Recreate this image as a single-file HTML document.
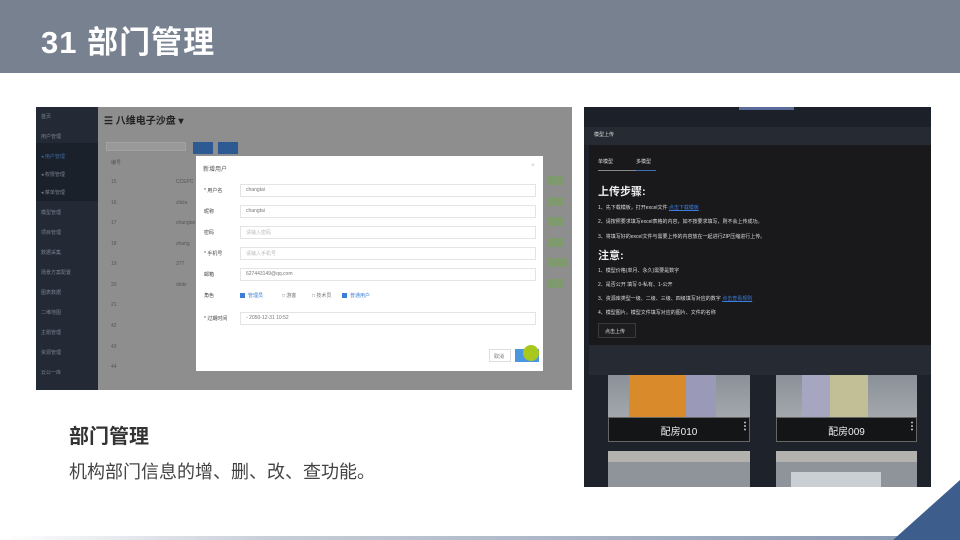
<!DOCTYPE html>
<html><head><meta charset="utf-8"><style>
*{margin:0;padding:0;box-sizing:border-box}
body{width:960px;height:540px;overflow:hidden;background:#fff;position:relative;font-family:"Liberation Sans","Noto Sans CJK SC",sans-serif}
.a{position:absolute}
.t{font-size:5px;color:#666;white-space:nowrap}
.w{color:#ddd}
</style></head><body>
<div class="a" style="left:0;top:0;width:960px;height:73px;background:#77818f"></div>
<div class="a" style="left:41px;top:17px;font-size:31px;font-weight:bold;color:#fff;letter-spacing:1px">31 部门管理</div>

<div class="a" style="left:36px;top:107px;width:536px;height:283px;background:#8e8e8e;overflow:hidden">
  <div class="a" style="left:0;top:0;width:62px;height:283px;background:#232a36"></div>
  <div class="a" style="left:0;top:36px;width:62px;height:58px;background:#1b212b"></div>
  <div class="a t" style="left:5px;top:6px;color:#7a8190">首页</div>
  <div class="a t" style="left:5px;top:26px;color:#7a8190">用户管理</div>
  <div class="a t" style="left:5px;top:46px;color:#3c6aa0">◂ 用户管理</div>
  <div class="a t" style="left:5px;top:64px;color:#7a8190">◂ 权限管理</div>
  <div class="a t" style="left:5px;top:82px;color:#7a8190">◂ 菜单管理</div>
  <div class="a t" style="left:5px;top:102px;color:#7a8190">模型管理</div>
  <div class="a t" style="left:5px;top:122px;color:#7a8190">项目管理</div>
  <div class="a t" style="left:5px;top:142px;color:#7a8190">数据采集</div>
  <div class="a t" style="left:5px;top:162px;color:#7a8190">场景方案配置</div>
  <div class="a t" style="left:5px;top:182px;color:#7a8190">图表数据</div>
  <div class="a t" style="left:5px;top:202px;color:#7a8190">二维地图</div>
  <div class="a t" style="left:5px;top:222px;color:#7a8190">主题管理</div>
  <div class="a t" style="left:5px;top:242px;color:#7a8190">资源管理</div>
  <div class="a t" style="left:5px;top:262px;color:#7a8190">云公一库</div>
  <div class="a" style="left:68px;top:5px;font-size:10px;font-weight:bold;color:#222">☰ 八维电子沙盘 ▾</div>
  <div class="a" style="left:70px;top:35px;width:80px;height:9px;background:#999;border:1px solid #a3a3a3"></div>
  <div class="a" style="left:157px;top:35px;width:20px;height:12px;background:#2d5a92"></div>
  <div class="a" style="left:182px;top:35px;width:20px;height:12px;background:#2d5a92"></div>
  <div class="a t" style="left:75px;top:52px;color:#555">编号</div>
  <div class="a t" style="left:75px;top:72px;color:#555">15</div><div class="a t" style="left:140px;top:72px;color:#555">CCEPC</div>
  <div class="a t" style="left:75px;top:93px;color:#555">16</div><div class="a t" style="left:140px;top:93px;color:#555">slicia</div>
  <div class="a t" style="left:75px;top:113px;color:#555">17</div><div class="a t" style="left:140px;top:113px;color:#555">changtai</div>
  <div class="a t" style="left:75px;top:134px;color:#555">18</div><div class="a t" style="left:140px;top:134px;color:#555">zhang</div>
  <div class="a t" style="left:75px;top:154px;color:#555">19</div><div class="a t" style="left:140px;top:154px;color:#555">377</div>
  <div class="a t" style="left:75px;top:175px;color:#555">20</div><div class="a t" style="left:140px;top:175px;color:#555">dinkr</div>
  <div class="a t" style="left:75px;top:195px;color:#555">21</div>
  <div class="a t" style="left:75px;top:216px;color:#555">42</div>
  <div class="a t" style="left:75px;top:237px;color:#555">43</div>
  <div class="a t" style="left:75px;top:257px;color:#555">44</div>
  <div class="a" style="left:512px;top:69px;width:16px;height:9px;background:#7f9a6e"></div>
  <div class="a" style="left:512px;top:90px;width:16px;height:9px;background:#7f9a6e"></div>
  <div class="a" style="left:512px;top:110px;width:16px;height:9px;background:#7f9a6e"></div>
  <div class="a" style="left:512px;top:131px;width:16px;height:9px;background:#7f9a6e"></div>
  <div class="a" style="left:512px;top:151px;width:20px;height:9px;background:#7f9a6e"></div>
  <div class="a" style="left:512px;top:172px;width:16px;height:9px;background:#7f9a6e"></div>
  <div class="a" style="left:160px;top:49px;width:347px;height:215px;background:#fff">
    <div class="a" style="left:7px;top:8px;font-size:6px;color:#555">新增用户</div>
    <div class="a" style="left:335px;top:7px;font-size:6px;color:#bbb">×</div>
    <div class="a t" style="left:8px;top:31px;color:#444">* 用户名</div>
    <div class="a t" style="left:8px;top:52px;color:#444">昵称</div>
    <div class="a t" style="left:8px;top:73px;color:#444">密码</div>
    <div class="a t" style="left:8px;top:94px;color:#444">* 手机号</div>
    <div class="a t" style="left:8px;top:115px;color:#444">邮箱</div>
    <div class="a t" style="left:8px;top:136px;color:#444">角色</div>
    <div class="a t" style="left:8px;top:159px;color:#444">* 过期时间</div>
    <div class="a" style="left:44px;top:28px;width:296px;height:13px;border:1px solid #e4e4e4"></div><div class="a t" style="left:50px;top:31px;color:#777">changtai</div>
    <div class="a" style="left:44px;top:49px;width:296px;height:13px;border:1px solid #e4e4e4"></div><div class="a t" style="left:50px;top:52px;color:#777">changtai</div>
    <div class="a" style="left:44px;top:70px;width:296px;height:13px;border:1px solid #e4e4e4"></div><div class="a t" style="left:50px;top:73px;color:#bbb">请输入密码</div>
    <div class="a" style="left:44px;top:91px;width:296px;height:13px;border:1px solid #e4e4e4"></div><div class="a t" style="left:50px;top:94px;color:#bbb">请输入手机号</div>
    <div class="a" style="left:44px;top:112px;width:296px;height:13px;border:1px solid #e4e4e4"></div><div class="a t" style="left:50px;top:115px;color:#777">627443149@qq.com</div>
    <div class="a" style="left:44px;top:137px;width:5px;height:5px;background:#3b7dd8"></div><div class="a t" style="left:52px;top:136px;color:#3b7dd8">管理员</div>
    <div class="a t" style="left:86px;top:136px;color:#777">□ 游客</div>
    <div class="a t" style="left:116px;top:136px;color:#777">□ 技术员</div>
    <div class="a" style="left:146px;top:137px;width:5px;height:5px;background:#3b7dd8"></div><div class="a t" style="left:154px;top:136px;color:#3b7dd8">普通用户</div>
    <div class="a" style="left:44px;top:156px;width:296px;height:13px;border:1px solid #e4e4e4"></div><div class="a t" style="left:50px;top:159px;color:#777">▫ 2050-12-31 10:52</div>
    <div class="a" style="left:293px;top:193px;width:22px;height:13px;border:1px solid #ddd"></div><div class="a t" style="left:298px;top:197px;color:#777">取消</div>
    <div class="a" style="left:319px;top:193px;width:24px;height:13px;background:#4a97e0"></div>
    <div class="a" style="left:327px;top:189px;width:16px;height:16px;border-radius:50%;background:#a8c81e"></div>
  </div>
</div>

<div class="a" style="left:69px;top:420px;font-size:20px;font-weight:bold;color:#333">部门管理</div>
<div class="a" style="left:69px;top:458px;font-size:18px;color:#444">机构部门信息的增、删、改、查功能。</div>

<div class="a" style="left:584px;top:107px;width:347px;height:380px;background:#1e222a;overflow:hidden">
  <div class="a" style="left:0;top:0;width:347px;height:20px;background:#1c2028"></div>
  <div class="a" style="left:155px;top:0;width:55px;height:3px;background:#5b6b9a"></div>
  <div class="a" style="left:0;top:20px;width:347px;height:18px;background:#252a33"></div>
  <div class="a t w" style="left:10px;top:24px">模型上传</div>
  <div class="a" style="left:5px;top:38px;width:342px;height:200px;background:#19191b"></div>
  <div class="a t w" style="left:14px;top:51px">单模型</div>
  <div class="a t w" style="left:52px;top:51px">多模型</div>
  <div class="a" style="left:14px;top:63px;width:58px;height:1px;background:#888"></div>
  <div class="a" style="left:52px;top:63px;width:20px;height:1px;background:#3d6fb5"></div>
  <div class="a" style="left:14px;top:76px;font-size:11px;font-weight:bold;color:#eee">上传步骤:</div>
  <div class="a t w" style="left:14px;top:97px">1、先下载模板，打开excel文件 <span style="color:#3b7ee0;text-decoration:underline">点击下载模板</span></div>
  <div class="a t w" style="left:14px;top:111px">2、请按照要求填写excel表格的内容，如不按要求填写，则不会上传成功。</div>
  <div class="a t w" style="left:14px;top:126px">3、将填写好的excel文件与需要上传的内容放在一起进行ZIP压缩进行上传。</div>
  <div class="a" style="left:14px;top:140px;font-size:11px;font-weight:bold;color:#eee">注意:</div>
  <div class="a t w" style="left:14px;top:160px">1、模型价格(单月、永久)需要是数字</div>
  <div class="a t w" style="left:14px;top:174px">2、是否公开 填写 0-私有、1-公开</div>
  <div class="a t w" style="left:14px;top:188px">3、资源库类型一级、二级、三级、四级填写对应的数字 <span style="color:#3b7ee0;text-decoration:underline">点击查看规则</span></div>
  <div class="a t w" style="left:14px;top:202px">4、模型图片，模型文件填写对应的图片、文件的名称</div>
  <div class="a" style="left:14px;top:216px;width:38px;height:15px;border:1px solid #3a3a3e;background:#1d1d20"></div>
  <div class="a t w" style="left:21px;top:221px">点击上传</div>
  <div class="a" style="left:5px;top:238px;width:342px;height:30px;background:#262a32"></div>
  <div class="a" style="left:24px;top:268px;width:142px;height:42px;background:linear-gradient(#8a9098,#a4a8ad)"></div>
  <div class="a" style="left:45px;top:268px;width:57px;height:42px;background:#d98a2a"></div>
  <div class="a" style="left:102px;top:268px;width:30px;height:42px;background:#9a9ab8"></div>
  <div class="a" style="left:24px;top:310px;width:142px;height:25px;background:#141517;border:1px solid #666"></div>
  <div class="a" style="left:24px;top:316px;width:142px;text-align:center;font-size:10px;color:#eee">配房010</div>
  <div class="a" style="left:156px;top:314px;font-size:10px;color:#eee;font-weight:bold">⋮</div>
  <div class="a" style="left:192px;top:268px;width:141px;height:42px;background:linear-gradient(#8a9098,#a4a8ad)"></div>
  <div class="a" style="left:218px;top:268px;width:28px;height:42px;background:#a7a6c0"></div>
  <div class="a" style="left:246px;top:268px;width:38px;height:42px;background:#c2bf96"></div>
  <div class="a" style="left:192px;top:310px;width:141px;height:25px;background:#141517;border:1px solid #666"></div>
  <div class="a" style="left:192px;top:316px;width:141px;text-align:center;font-size:10px;color:#eee">配房009</div>
  <div class="a" style="left:323px;top:314px;font-size:10px;color:#eee;font-weight:bold">⋮</div>
  <div class="a" style="left:24px;top:344px;width:142px;height:40px;background:linear-gradient(#b4b2ae 0,#b4b2ae 11px,#8e949a 11px)"></div>
  <div class="a" style="left:192px;top:344px;width:141px;height:40px;background:linear-gradient(#b4b2ae 0,#b4b2ae 11px,#8e949a 11px)"></div>
  <div class="a" style="left:207px;top:365px;width:90px;height:20px;background:#c9cfd3"></div>
</div>

<div class="a" style="left:0;top:536px;width:900px;height:4px;background:linear-gradient(90deg,#fff,#c8ced8 30%,#8a9ab2)"></div>
<svg class="a" style="left:880px;top:470px" width="80" height="70"><polygon points="13,70 80,10 80,70" fill="#3d5e8c"/></svg>
</body></html>
